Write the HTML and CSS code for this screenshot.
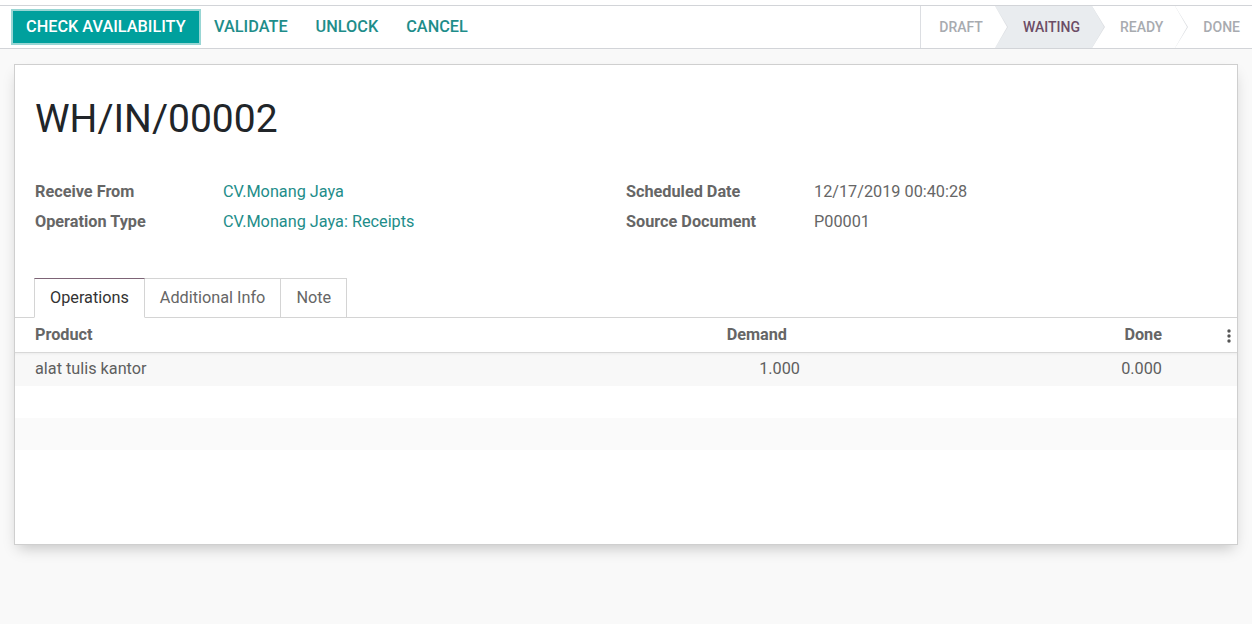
FILE: index.html
```html
<!DOCTYPE html>
<html>
<head>
<meta charset="utf-8">
<link rel="stylesheet" href="styles.css">
</head>
<body>
<div class="top">
  <div class="bar">
    <div class="buttons">
      <button class="btn btn-primary">Check Availability</button>
      <button class="btn btn-link">Validate</button>
      <button class="btn btn-link">Unlock</button>
      <button class="btn btn-link">Cancel</button>
    </div>
    <div class="statusbar">
      <div class="status">Draft</div>
      <div class="status active">Waiting</div>
      <div class="status">Ready</div>
      <div class="status">Done</div>
    </div>
  </div>
</div>

<div class="sheet">
  <h1 class="title">WH/IN/00002</h1>
  <div class="fields">
    <div class="group">
      <div class="label">Receive From</div><div class="value link">CV.Monang Jaya</div>
      <div class="label">Operation Type</div><div class="value link">CV.Monang Jaya: Receipts</div>
    </div>
    <div class="group">
      <div class="label">Scheduled Date</div><div class="value">12/17/2019 00:40:28</div>
      <div class="label">Source Document</div><div class="value">P00001</div>
    </div>
  </div>

  <div class="tabs">
    <div class="tab active">Operations</div>
    <div class="tab">Additional Info</div>
    <div class="tab">Note</div>
  </div>

  <table class="list">
    <colgroup>
      <col class="c-product"><col class="c-demand"><col class="c-done"><col class="c-opt">
    </colgroup>
    <thead>
      <tr>
        <th class="left">Product</th>
        <th class="right demand-h">Demand</th>
        <th class="right">Done</th>
        <th class="opt"><svg width="4" height="14" viewBox="0 0 4 14"><circle cx="2" cy="2" r="1.7" fill="#555"/><circle cx="2" cy="7" r="1.7" fill="#555"/><circle cx="2" cy="12" r="1.7" fill="#555"/></svg></th>
      </tr>
    </thead>
    <tbody>
      <tr class="data">
        <td class="left">alat tulis kantor</td>
        <td class="right">1.000</td>
        <td class="right">0.000</td>
        <td></td>
      </tr>
      <tr class="empty"><td></td><td></td><td></td><td></td></tr>
      <tr class="empty"><td></td><td></td><td></td><td></td></tr>
      <tr class="empty"><td></td><td></td><td></td><td></td></tr>
    </tbody>
  </table>
</div>
</body>
</html>
```

FILE: styles.css
```css
* { box-sizing: border-box; }

html, body {
  margin: 0;
  padding: 0;
}

body {
  background: #f9f9f9;
  font-family: Roboto, "Noto Sans", sans-serif;
  font-size: 16.25px;
  color: #666;
  width: 1252px;
  height: 624px;
  overflow: hidden;
}

.top {
  background: #fff;
  padding-top: 5px;
}

.bar {
  display: flex;
  align-items: stretch;
  border-top: 1px solid #d2d4d8;
  border-bottom: 1px solid #d2d4d8;
  background: #fff;
  height: 44px;
}

.buttons {
  display: flex;
  align-items: center;
  padding-left: 13px;
}

.btn {
  font-family: Roboto, sans-serif;
  font-size: 16.3px;
  font-weight: 500;
  text-transform: uppercase;
  border: none;
  background: none;
  height: 32px;
  padding: 0 13px 2px;
  cursor: pointer;
}

.btn-primary {
  background: #00a09d;
  color: #fff;
  box-shadow: 0 0 0 2px #98d6d4;
}

.btn-link {
  color: #1e8d8a;
  margin-left: 3px;
  padding-left: 12.5px;
  padding-right: 12.5px;
}

.statusbar {
  display: flex;
  margin-left: auto;
  border-left: 1px solid #dcdee2;
}

.status {
  position: relative;
  height: 42px;
  line-height: 42px;
  padding: 0 12px 0 28px;
  font-size: 14px;
  font-weight: 500;
  text-transform: uppercase;
  color: #a8abb0;
  background: #fff;
}

.status:first-child { padding-left: 18px; }

.status::before,
.status::after {
  content: "";
  position: absolute;
  top: 0;
  border-top: 21px solid transparent;
  border-bottom: 21px solid transparent;
  z-index: 2;
}

.status::before {
  right: -13px;
  border-left: 13px solid #dcdee2;
}

.status::after {
  right: -12px;
  border-left: 12px solid #fff;
}

.status.active {
  background: #e9ecef;
  color: #6c4d66;
}

.status.active::after { border-left-color: #e9ecef; }

.status:last-child { padding-right: 12px; }

.status:last-child::before,
.status:last-child::after { display: none; }

.sheet {
  margin: 15px 14px 0;
  background: #fff;
  border: 1px solid #cfcfcf;
  min-height: 481px;
  padding-top: 30px;
  box-shadow: 0 7px 14px -4px rgba(0, 0, 0, 0.22);
}

.title {
  margin: 0;
  padding: 0 20px;
  font-size: 39px;
  line-height: 48px;
  font-weight: 400;
  color: #212529;
}

.fields {
  display: grid;
  grid-template-columns: 1fr 1fr;
  padding: 0 20px;
  margin-top: 34px;
}

.group {
  display: grid;
  grid-template-columns: 188px 1fr;
  line-height: 30px;
}

.label {
  font-weight: 700;
  color: #666;
}

.value {
  color: #666;
}

.value.link {
  color: #1e8d8a;
}

.tabs {
  display: flex;
  margin-top: 41px;
  padding-left: 19px;
  border-bottom: 1px solid #d4d4d4;
}

.tab {
  padding: 8px 15px;
  line-height: 22px;
  border: 1px solid #d4d4d4;
  border-left-width: 0;
  margin-bottom: -1px;
  color: #666;
  background: #fff;
}

.tab:first-child { border-left-width: 1px; }

.tab.active {
  color: #333;
  border-top-color: #7d6476;
  border-bottom-color: #fff;
}

.list {
  width: 100%;
  border-collapse: collapse;
  table-layout: fixed;
}

.c-product { width: 585px; }
.c-demand { width: 208px; }
.c-done { width: 362px; }
.c-opt { width: 67px; }

.list th {
  height: 34px;
  line-height: 33px;
  font-weight: 700;
  color: #666;
  border-bottom: 1px solid #d8d8d8;
  padding: 0 8px;
  text-align: left;
}

.list th.left, .list td.left { padding-left: 20px; }
.list th.right, .list td.right { text-align: right; }
.list th.demand-h { padding-right: 21px; }
.list th.opt { text-align: right; padding-right: 6px; }
.list th.opt svg { vertical-align: middle; }

.list td {
  line-height: 31px;
  padding: 0 8px 2px;
  color: #5f5f5f;
}

.list tr.data td {
  height: 33px;
  background: #f8f8f8;
  box-shadow: inset 0 3px 3px -2px rgba(0, 0, 0, 0.05);
}

.list tr.empty td { height: 32px; padding: 0; }
.list tr.empty:nth-child(odd) td { background: #fafafa; }
```
